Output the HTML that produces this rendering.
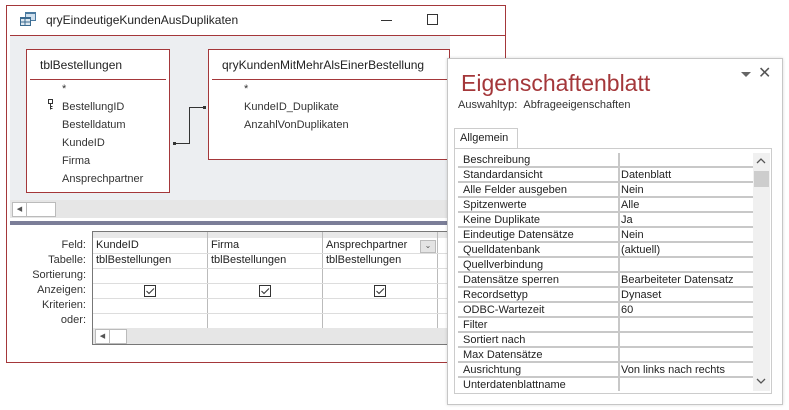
<!DOCTYPE html>
<html><head><style>
*{margin:0;padding:0;box-sizing:border-box}
body{width:789px;height:410px;background:#fff;position:relative;overflow:hidden;font-family:"Liberation Sans",sans-serif;font-size:11px;color:#222}
.a{position:absolute}
.win{left:6px;top:5px;width:500px;height:358px;border:1px solid #a4373a;background:#fff}
.tb{border:1px solid #a4373a;background:#fff}
.tt{font-size:12px;color:#222}
.f{font-size:11px;color:#333;line-height:18px}
.gl{font-size:11px;color:#333;text-align:right;width:80px;left:6px;line-height:15px}
.cell{font-size:11px;color:#222;line-height:15px}
.pr{left:458px;width:295px;height:15px;border-bottom:2px solid #c8c8c8;font-size:11px;line-height:14px;color:#222}
.pr span{position:absolute;left:5px}
.pr b{font-weight:normal;position:absolute;left:163px}
.pr i{position:absolute;left:160px;top:0;width:2px;height:15px;background:#c8c8c8}
</style></head><body>
<div class="a win"></div>
<svg class="a" style="left:20px;top:12px" width="17" height="15"><rect x="5" y="0" width="11" height="9" fill="#4a7aa0"/><rect x="6" y="2" width="9" height="6" fill="#cfe0ee"/><rect x="0" y="5" width="11" height="9" fill="#3a6a90"/><rect x="1" y="7" width="9" height="6" fill="#dde8f0"/><line x1="1" y1="10" x2="10" y2="10" stroke="#3a6a90"/><line x1="5" y1="7" x2="5" y2="13" stroke="#3a6a90"/></svg>
<div class="a" style="left:46px;top:13px;font-size:12px;color:#222">qryEindeutigeKundenAusDuplikaten</div>
<div class="a" style="left:381px;top:20px;width:11px;height:1px;background:#333"></div>
<div class="a" style="left:427px;top:14px;width:11px;height:11px;border:1px solid #333"></div>
<div class="a" style="left:10px;top:35px;width:496px;height:1px;background:#a4373a"></div>
<div class="a" style="left:10px;top:36px;width:440px;height:164px;background:#eceef1"></div>
<div class="a tb" style="left:26px;top:49px;width:144px;height:144px"></div>
<div class="a tt" style="left:40px;top:58px">tblBestellungen</div>
<div class="a" style="left:30px;top:79px;width:136px;height:1px;background:#a4373a"></div>
<div class="a f" style="left:62px;top:80px">*<br>BestellungID<br>Bestelldatum<br>KundeID<br>Firma<br>Ansprechpartner</div>
<svg class="a" style="left:47px;top:99px" width="7" height="11"><g fill="none" stroke="#333"><rect x="1.5" y="0.5" width="4" height="4"/><path d="M3.5 4.5V10.5M3.5 7.5H5.5M3.5 9.5H5.5"/></g></svg>
<svg class="a" style="left:172px;top:105px" width="36" height="40"><path d="M2 38.5H17.5V2.5H32" fill="none" stroke="#333" stroke-width="1"/><rect x="1" y="37" width="3" height="3" fill="#333"/><rect x="31" y="1" width="3" height="3" fill="#333"/></svg>
<div class="a tb" style="left:208px;top:49px;width:242px;height:111px"></div>
<div class="a tt" style="left:222px;top:58px">qryKundenMitMehrAlsEinerBestellung</div>
<div class="a" style="left:212px;top:79px;width:238px;height:1px;background:#a4373a"></div>
<div class="a f" style="left:244px;top:80px">*<br>KundeID_Duplikate<br>AnzahlVonDuplikaten</div>
<div class="a" style="left:10px;top:200px;width:440px;height:18px;background:#e6e6e6"></div>
<div class="a" style="left:12px;top:202px;width:44px;height:15px;border:1px solid #bbb;background:#fff"></div>
<div class="a" style="left:12px;top:202px;width:15px;height:15px;border:1px solid #bbb;background:#fff;font-size:7px;color:#555;line-height:13px;text-align:center">&#9664;</div>
<div class="a" style="left:10px;top:221px;width:440px;height:4px;background:#7b7e98"></div>
<div class="a" style="left:92px;top:231px;width:358px;height:114px;border:1px solid #777;background:#fff"></div>
<div class="a" style="left:93px;top:232px;width:357px;height:6px;background:#e8e8e8"></div>
<div class="a gl" style="top:238px;line-height:15px">Feld:<br>Tabelle:<br>Sortierung:<br>Anzeigen:<br>Kriterien:<br>oder:</div>
<div class="a" style="left:207px;top:232px;width:1px;height:96px;background:#bbb"></div>
<div class="a" style="left:322px;top:232px;width:1px;height:96px;background:#bbb"></div>
<div class="a" style="left:437px;top:232px;width:1px;height:96px;background:#bbb"></div>
<div class="a" style="left:93px;top:253px;width:357px;height:1px;background:#ddd"></div>
<div class="a" style="left:93px;top:268px;width:357px;height:1px;background:#ddd"></div>
<div class="a" style="left:93px;top:283px;width:357px;height:1px;background:#ddd"></div>
<div class="a" style="left:93px;top:298px;width:357px;height:1px;background:#ddd"></div>
<div class="a" style="left:93px;top:313px;width:357px;height:1px;background:#ddd"></div>
<div class="a cell" style="left:96px;top:238px">KundeID<br>tblBestellungen</div>
<div class="a cell" style="left:211px;top:238px">Firma<br>tblBestellungen</div>
<div class="a cell" style="left:326px;top:238px">Ansprechpartner<br>tblBestellungen</div>
<div class="a" style="left:420px;top:240px;width:16px;height:13px;border:1px solid #bbb;background:#e4e4e4;font-size:8px;color:#555;text-align:center;line-height:10px">&#8964;</div>
<svg class="a" style="left:144px;top:285px" width="300" height="14"><g fill="none" stroke="#333"><rect x="0.5" y="0.5" width="11" height="11"/><rect x="115.5" y="0.5" width="11" height="11"/><rect x="230.5" y="0.5" width="11" height="11"/><path d="M2.5 6l2.5 2.5l5-5M117.5 6l2.5 2.5l5-5M232.5 6l2.5 2.5l5-5"/></g></svg>
<div class="a" style="left:93px;top:328px;width:357px;height:16px;background:#e6e6e6"></div>
<div class="a" style="left:95px;top:329px;width:32px;height:15px;border:1px solid #bbb;background:#fff"></div>
<div class="a" style="left:95px;top:329px;width:15px;height:15px;border:1px solid #bbb;background:#fff;font-size:7px;color:#555;line-height:13px;text-align:center">&#9664;</div>
<div class="a" style="left:447px;top:58px;width:336px;height:347px;background:#fff;border:1px solid #c6c6c6;box-shadow:0 0 3px rgba(0,0,0,.15)"></div>
<div class="a" style="left:461px;top:70px;font-size:23px;color:#a4373a">Eigenschaftenblatt</div>
<div class="a" style="left:458px;top:99px;font-size:11px;color:#333">Auswahltyp:&nbsp;&nbsp;Abfrageeigenschaften</div>
<div class="a" style="left:741px;top:72px;width:0;height:0;border-left:5px solid transparent;border-right:5px solid transparent;border-top:5px solid #666"></div>
<div class="a" style="left:758px;top:63px;font-size:16px;color:#555">&#10005;</div>
<div class="a" style="left:454px;top:128px;width:64px;height:21px;border:1px solid #ccc;border-bottom:none;background:#fff;font-size:11px;line-height:19px;padding-left:5px">Allgemein</div>
<div class="a" style="left:454px;top:148px;width:318px;height:246px;border:1px solid #ccc"></div>
<div class="a" style="left:518px;top:148px;width:254px;height:1px;background:#ccc"></div>
<div class="a" style="left:753px;top:153px;width:17px;height:238px;background:#f0f0f0"></div>
<div class="a" style="left:754px;top:171px;width:15px;height:16px;background:#cdcdcd"></div>
<svg class="a" style="left:756px;top:158px" width="10" height="6"><path d="M1 5L5 1L9 5" fill="none" stroke="#555" stroke-width="1.3"/></svg>
<svg class="a" style="left:756px;top:378px" width="10" height="6"><path d="M1 1L5 5L9 1" fill="none" stroke="#555" stroke-width="1.3"/></svg>
<div class="a" style="left:458px;top:153px;width:295px;height:238px;overflow:hidden">
<div style="position:relative">
<div class="pr a" style="left:0;top:0"><span>Beschreibung</span><i></i><b></b></div>
<div class="pr a" style="left:0;top:15px"><span>Standardansicht</span><i></i><b>Datenblatt</b></div>
<div class="pr a" style="left:0;top:30px"><span>Alle Felder ausgeben</span><i></i><b>Nein</b></div>
<div class="pr a" style="left:0;top:45px"><span>Spitzenwerte</span><i></i><b>Alle</b></div>
<div class="pr a" style="left:0;top:60px"><span>Keine Duplikate</span><i></i><b>Ja</b></div>
<div class="pr a" style="left:0;top:75px"><span>Eindeutige Datensätze</span><i></i><b>Nein</b></div>
<div class="pr a" style="left:0;top:90px"><span>Quelldatenbank</span><i></i><b>(aktuell)</b></div>
<div class="pr a" style="left:0;top:105px"><span>Quellverbindung</span><i></i><b></b></div>
<div class="pr a" style="left:0;top:120px"><span>Datensätze sperren</span><i></i><b>Bearbeiteter Datensatz</b></div>
<div class="pr a" style="left:0;top:135px"><span>Recordsettyp</span><i></i><b>Dynaset</b></div>
<div class="pr a" style="left:0;top:150px"><span>ODBC-Wartezeit</span><i></i><b>60</b></div>
<div class="pr a" style="left:0;top:165px"><span>Filter</span><i></i><b></b></div>
<div class="pr a" style="left:0;top:180px"><span>Sortiert nach</span><i></i><b></b></div>
<div class="pr a" style="left:0;top:195px"><span>Max Datensätze</span><i></i><b></b></div>
<div class="pr a" style="left:0;top:210px"><span>Ausrichtung</span><i></i><b>Von links nach rechts</b></div>
<div class="pr a" style="left:0;top:225px"><span>Unterdatenblattname</span><i></i><b></b></div>
</div></div>
</body></html>
